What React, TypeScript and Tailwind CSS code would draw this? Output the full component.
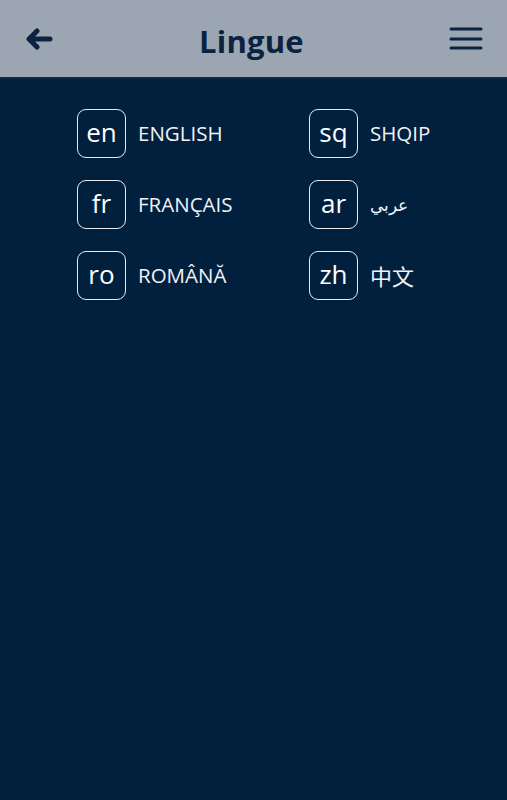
import React from 'react';

const langs = [
  { code: 'en', name: 'ENGLISH' },
  { code: 'sq', name: 'SHQIP' },
  { code: 'fr', name: 'FRANÇAIS' },
  { code: 'ar', name: 'عربي', size: 'text-[17px]' },
  { code: 'ro', name: 'ROMÂNĂ' },
  { code: 'zh', name: '中文', size: 'text-[22px]' },
];

const App: React.FC = () => {
  return (
    <div className="w-[507px] h-[800px] bg-[#01203e] font-['Open_Sans','Noto_Sans_CJK_SC',sans-serif] overflow-hidden">
      {/* Header */}
      <header className="h-[79px] bg-[#9ba6b2] border-b-2 border-[#0d2a48] flex items-center justify-between px-[24px]">
        <svg width="30" height="22" viewBox="0 0 30 22">
          <path d="M26 11 H6 M13 3 L5 11 L13 19" stroke="#0b2340" strokeWidth="5" strokeLinecap="round" strokeLinejoin="round" fill="none" />
        </svg>
        <h1 className="text-[31px] font-bold text-[#0b2340] tracking-[0.2px] mt-[5px]">Lingue</h1>
        <svg width="34" height="24" viewBox="0 0 34 24">
          <g stroke="#0b2340" strokeWidth="3" strokeLinecap="round">
            <line x1="2" y1="2" x2="32" y2="2" />
            <line x1="2" y1="12" x2="32" y2="12" />
            <line x1="2" y1="21" x2="32" y2="21" />
          </g>
        </svg>
      </header>

      {/* Language grid */}
      <div className="grid grid-cols-[232px_150px] gap-y-[22px] pl-[77px] pt-[30px]">
        {langs.map((l) => (
          <div key={l.code} className="flex items-center gap-[12px]">
            <div className="w-[49px] h-[49px] rounded-[9px] border-[1.5px] border-[#e6ebf0] flex items-center justify-center text-white text-[26px] leading-none pb-[3px]">
              {l.code}
            </div>
            <span className={`text-[#f0f3f6] ${l.size ?? 'text-[20.5px]'} leading-none`}>
              {l.name}
            </span>
          </div>
        ))}
      </div>
    </div>
  );
};

export default App;
